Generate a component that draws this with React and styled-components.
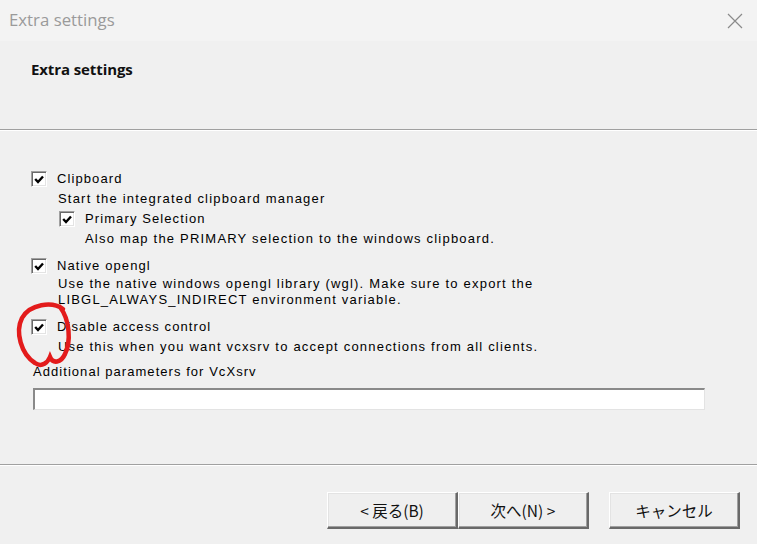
import React from "react";
import styled, { createGlobalStyle } from "styled-components";

const Global = createGlobalStyle`
  html, body { margin: 0; padding: 0; background: #f0f0f0; }
  body { font-family: "Liberation Sans", Arial, sans-serif; }
`;

const Window = styled.div`
  position: relative;
  width: 757px;
  height: 544px;
  background: #f0f0f0;
  display: flex;
  flex-direction: column;
  overflow: hidden;
`;

const TitleBar = styled.div`
  height: 41px;
  flex: none;
  background: #f3f3f3;
  display: flex;
  align-items: center;
  justify-content: space-between;
  padding: 0 14px 0 9px;
  box-sizing: border-box;
`;

const TitleText = styled.div`
  font-family: "Open Sans", "Noto Sans", sans-serif;
  font-size: 16.8px;
  color: #9a9a9a;
  margin-top: -2px;
`;

const Header = styled.div`
  height: 88px;
  flex: none;
  padding: 18px 0 0 31px;
  box-sizing: border-box;
`;

const HeaderTitle = styled.div`
  font-family: "Open Sans", "Noto Sans", sans-serif;
  font-weight: 700;
  font-size: 15px;
  color: #111;
  letter-spacing: -0.1px;
`;

const Separator = styled.div`
  flex: none;
  height: 1px;
  background: #a0a0a0;
  border-bottom: 1px solid #ffffff;
`;

const Content = styled.div`
  flex: 1;
  padding: 40px 0 0 31px;
  box-sizing: border-box;
  display: flex;
  flex-direction: column;
`;

const Row = styled.div`
  display: flex;
  align-items: center;
  height: 16px;
  margin-top: ${(p) => p.$mt || 0}px;
  margin-left: ${(p) => p.$indent || 0}px;
`;

const Label = styled.span`
  font-size: 13px;
  line-height: 16px;
  letter-spacing: 1.1px;
  color: #000;
  white-space: nowrap;
`;

const Desc = styled.div`
  font-size: 13px;
  line-height: 16px;
  letter-spacing: 1.2px;
  color: #000;
  margin-top: ${(p) => p.$mt || 0}px;
  margin-left: ${(p) => p.$indent || 0}px;
  white-space: pre;
`;

const Box = styled.span`
  width: 14px;
  height: 14px;
  flex: none;
  margin-right: 10px;
  background: #fff;
  border-top: 1px solid #a0a0a0;
  border-left: 1px solid #a0a0a0;
  border-right: 1px solid #ffffff;
  border-bottom: 1px solid #ffffff;
  box-shadow: inset 1px 1px 0 #696969, inset -1px -1px 0 #e3e3e3;
  display: flex;
  align-items: center;
  justify-content: center;
`;

const Check = () => (
  <Box>
    <svg width="10" height="9" viewBox="0 0 10 9">
      <path d="M1.2 4 L4 7 L9 1.5" fill="none" stroke="#000" strokeWidth="2.4" />
    </svg>
  </Box>
);

const FieldLabel = styled.div`
  font-size: 13px;
  line-height: 16px;
  letter-spacing: 1.05px;
  color: #000;
  margin: 9px 0 0 2px;
`;

const Input = styled.div`
  width: 672px;
  height: 22px;
  margin: 8px 0 0 2px;
  box-sizing: border-box;
  background: #fff;
  border-top: 2px solid #8a8a8a;
  border-left: 2px solid #8a8a8a;
  border-right: 1px solid #e3e3e3;
  border-bottom: 1px solid #e3e3e3;
`;

const Footer = styled.div`
  height: 78px;
  flex: none;
  display: flex;
  justify-content: flex-end;
  align-items: flex-start;
  padding: 26px 17px 0 0;
  box-sizing: border-box;
`;

const Button = styled.button`
  width: 131px;
  height: 37px;
  margin-left: ${(p) => p.$ml || 0}px;
  background: #efefef;
  border: none;
  border-top: 1px solid #ffffff;
  border-left: 1px solid #ffffff;
  border-right: 2px solid #696969;
  border-bottom: 2px solid #696969;
  box-shadow: inset -1px -1px 0 #a0a0a0, inset 1px 1px 0 #e3e3e3;
  font-family: "Noto Sans CJK JP", "Noto Sans", sans-serif;
  font-size: 15.5px;
  color: #111;
  padding: 0;
  display: flex;
  align-items: center;
  justify-content: center;
  white-space: pre;
`;

const Overlay = styled.svg`
  position: absolute;
  left: 0;
  top: 0;
  pointer-events: none;
`;

export default function App() {
  return (
    <Window>
      <Global />
      <TitleBar>
        <TitleText>Extra settings</TitleText>
        <svg width="16" height="16" viewBox="0 0 16 16">
          <path d="M1 1 L15 15 M15 1 L1 15" stroke="#8a8a8a" strokeWidth="1.2" />
        </svg>
      </TitleBar>
      <Header>
        <HeaderTitle>Extra settings</HeaderTitle>
      </Header>
      <Separator />
      <Content>
        <Row>
          <Check />
          <Label>Clipboard</Label>
        </Row>
        <Desc $mt={4} $indent={27}>Start the integrated clipboard manager</Desc>
        <Row $mt={4} $indent={28}>
          <Check />
          <Label>Primary Selection</Label>
        </Row>
        <Desc $mt={4} $indent={54}>Also map the PRIMARY selection to the windows clipboard.</Desc>
        <Row $mt={11}>
          <Check />
          <Label>Native opengl</Label>
        </Row>
        <Desc $mt={2} $indent={27}>{"Use the native windows opengl library (wgl). Make sure to export the\nLIBGL_ALWAYS_INDIRECT environment variable."}</Desc>
        <Row $mt={11}>
          <Check />
          <Label>Disable access control</Label>
        </Row>
        <Desc $mt={4} $indent={27}>Use this when you want vcxsrv to accept connections from all clients.</Desc>
        <FieldLabel>Additional parameters for VcXsrv</FieldLabel>
        <Input />
      </Content>
      <Separator />
      <Footer>
        <Button>{"< 戻る(B)"}</Button>
        <Button>{"次へ(N) >"}</Button>
        <Button $ml={20}>キャンセル</Button>
      </Footer>
      <Overlay width="757" height="544">
        <path
          d="M63 309 C52 301, 30 304, 22 318 C15 332, 21 354, 35 363 C42 368, 48 362, 50 357 C53 364, 61 363, 65 354 C71 342, 70 320, 60 307"
          fill="none"
          stroke="#e31b1b"
          strokeWidth="4.5"
          strokeLinecap="round"
        />
      </Overlay>
    </Window>
  );
}
